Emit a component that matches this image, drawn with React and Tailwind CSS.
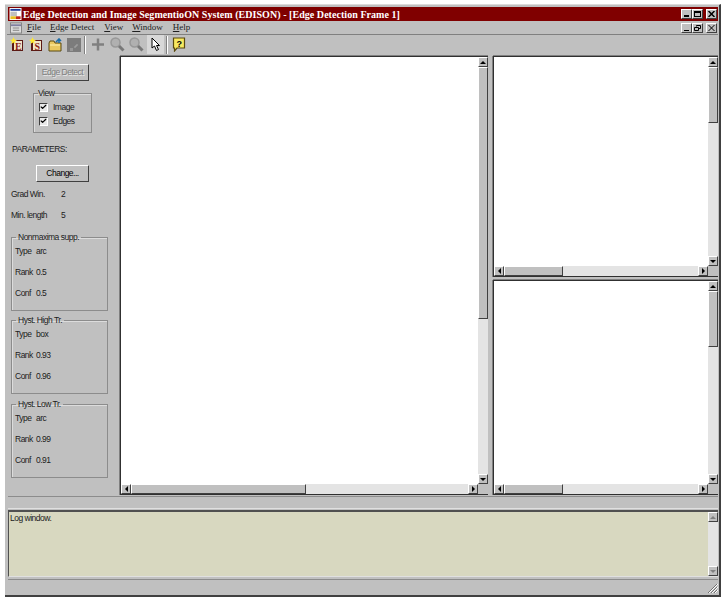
import { Check } from "lucide-react";

const raised = "border border-t-white border-l-white border-r-[#404040] border-b-[#404040]";

const Arrow = ({ dir, disabled }) => {
  const points = {
    up: "0,4 6,4 3,1",
    down: "0,1 6,1 3,4",
    left: "4,0 4,6 1,3",
    right: "1,0 1,6 4,3",
  }[dir];
  const box = dir === "up" || dir === "down" ? "0 0 6 5" : "0 0 5 6";
  const w = dir === "up" || dir === "down" ? 6 : 5;
  const h = dir === "up" || dir === "down" ? 5 : 6;
  return (
    <svg width={w} height={h} viewBox={box}>
      <polygon points={points} fill={disabled ? "#808080" : "#000"} />
    </svg>
  );
};

const ScrollButton = ({ dir, disabled }) => (
  <div className={`w-[10px] h-[10px] shrink-0 bg-[#c0c0c0] flex items-center justify-center ${raised}`}>
    <Arrow dir={dir} disabled={disabled} />
  </div>
);

const VScroll = ({ thumb }) => (
  <div className="w-[10px] shrink-0 flex flex-col bg-[#e4e4e4]">
    <ScrollButton dir="up" />
    <div className={`shrink-0 bg-[#c0c0c0] ${raised}`} style={{ height: thumb }} />
    <div className="flex-1" />
    <ScrollButton dir="down" />
  </div>
);

const HScroll = ({ thumb }) => (
  <div className="h-[10px] shrink-0 flex bg-[#e4e4e4]">
    <ScrollButton dir="left" />
    <div className={`shrink-0 bg-[#c0c0c0] ${raised}`} style={{ width: thumb }} />
    <div className="flex-1" />
    <ScrollButton dir="right" />
    <div className="w-[10px] bg-[#c0c0c0]" />
  </div>
);

const Pane = ({ vThumb, hThumb, className }) => (
  <div className={`flex flex-col border-t border-l border-b border-[#303030] shadow-[0_-1px_0_#808080,-1px_0_0_#808080] ${className}`}>
    <div className="flex flex-1 min-h-0">
      <div className="flex-1 bg-white" />
      <VScroll thumb={vThumb} />
    </div>
    <HScroll thumb={hThumb} />
  </div>
);

const CheckRow = ({ label }) => (
  <div className="flex items-center h-[14px] gap-[5px] pl-[5px]">
    <div className="w-[9px] h-[9px] bg-[#e8e8e8] border border-t-[#404040] border-l-[#404040] border-r-white border-b-white flex items-center justify-center">
      <Check size={8} strokeWidth={4} color="#000" />
    </div>
    <span>{label}</span>
  </div>
);

const Group = ({ title, type, rank, conf }) => (
  <fieldset className="w-[97px] h-[79px] ml-[4px] border border-[#8c8c8c] pl-[3px] shadow-[inset_1px_1px_0_#dcdcdc]">
    <legend className="ml-[1px] px-[2px] leading-[10px] h-[10px]">{title}</legend>
    <div className="grid grid-cols-[21px_1fr] auto-rows-[21px] items-center -mt-[1px]">
      <span>Type</span>
      <span>{type}</span>
      <span>Rank</span>
      <span>{rank}</span>
      <span>Conf</span>
      <span>{conf}</span>
    </div>
  </fieldset>
);

const Star = () => (
  <polygon points="3.5,0 4.5,2.5 7,3 5,4.6 5.6,7 3.5,5.6 1.4,7 2,4.6 0,3 2.5,2.5" fill="#ffe830" />
);

const DocIcon = ({ letter }) => (
  <svg width="14" height="15" viewBox="0 0 14 15">
    <rect x="2" y="3" width="11" height="11" fill="#5c1a14" />
    <rect x="4" y="4" width="8" height="9" fill="#f2e6c8" />
    <text x="8" y="12.5" textAnchor="middle" fontSize="10" fontWeight="700" fontFamily="Liberation Serif" fill="#8c1c14">
      {letter}
    </text>
    <Star />
  </svg>
);

const FolderIcon = () => (
  <svg width="15" height="14" viewBox="0 0 15 14">
    <path d="M1 5 L2 3 L6 3 L7 5 L13 5 L13 13 L1 13 Z" fill="#e8c860" stroke="#5a4a10" />
    <path d="M2 7 H12" stroke="#fff3b0" />
    <path d="M8 4 L11 1 L13 3 M11 1 V5" stroke="#1c6ea8" strokeWidth="1.6" fill="none" />
  </svg>
);

const DiskIcon = () => (
  <svg width="14" height="14" viewBox="0 0 14 14">
    <rect x="0" y="0" width="14" height="14" fill="#7c7c7c" />
    <path d="M7 9 H9 V7 H11" stroke="#a8a8a8" fill="none" />
    <rect x="3" y="10" width="3" height="3" fill="#989898" />
  </svg>
);

const PlusIcon = () => (
  <svg width="15" height="15" viewBox="0 0 15 15">
    <path d="M7 1.500 V13.500 M1 7.500 H13" stroke="#808080" strokeWidth="2.5" />
  </svg>
);

const ZoomIcon = () => (
  <svg width="15" height="15" viewBox="0 0 15 15">
    <circle cx="5.500" cy="5.500" r="4.500" fill="#b0b0b0" stroke="#989898" strokeWidth="1.500" />
    <path d="M9 9 L13.500 13.500" stroke="#787878" strokeWidth="3" />
  </svg>
);

const CursorIcon = () => (
  <svg width="10" height="15" viewBox="0 0 10 15">
    <path d="M1 1 V11 L3.5 9 L5.5 13.5 L7.5 12.5 L5.5 8.5 L8.5 8.5 Z" fill="#fff" stroke="#000" />
  </svg>
);

const HelpIcon = () => (
  <svg width="14" height="15" viewBox="0 0 14 15">
    <path d="M1.5 1 H12.5 V11 H5 L2.5 14 V11 H1.5 Z" fill="#f8e860" stroke="#5a4a10" strokeWidth="1.2" />
    <text x="7" y="9.5" textAnchor="middle" fontSize="9" fontWeight="700" fontFamily="Liberation Sans" fill="#000">
      ?
    </text>
  </svg>
);

const ToolSep = () => <div className="w-[2px] h-[18px] border-l border-l-[#808080] border-r border-r-white" />;

export default function App() {
  return (
    <div className="h-screen bg-white pt-[4px] pl-[5px] overflow-hidden font-['Liberation_Sans',sans-serif] text-[8.5px] tracking-[-0.5px] text-[#202020]">
      <div className="w-[716px] h-[593px] flex flex-col bg-[#c0c0c0] border-t border-t-[#dcdcdc] border-r-2 border-r-[#404040] border-b-2 border-b-[#404040] pl-[2px] pt-[2px]">
        {/* title bar */}
        <div className="h-[14px] shrink-0 ml-[1px] mr-[1px] bg-[#800000] flex items-center pl-[1px] pr-[1px]">
          <svg width="13" height="12" viewBox="0 0 13 13">
            <rect x="0" y="0" width="13" height="13" fill="#fff" />
            <rect x="1" y="1" width="11" height="2" fill="#1c3c9c" />
            <rect x="1" y="4" width="7" height="5" fill="#c0c0c0" />
            <rect x="1" y="9" width="6" height="3" fill="#e8c020" />
            <rect x="7" y="9" width="5" height="3" fill="#c02818" />
          </svg>
          <span className="ml-[1px] font-['Liberation_Serif',serif] font-bold text-[10px] tracking-[0.05px] text-white whitespace-nowrap">
            Edge Detection and Image SegmentioON System (EDISON) - [Edge Detection Frame 1]
          </span>
          <div className="ml-auto flex text-black">
            <div className={`w-[11px] h-[10px] bg-[#c0c0c0] flex items-end justify-center pb-[1px] ${raised}`}>
              <div className="w-[5px] h-[2px] bg-black" />
            </div>
            <div className={`w-[11px] h-[10px] bg-[#c0c0c0] flex items-center justify-center ${raised}`}>
              <div className="w-[7px] h-[6px] border border-black border-t-2" />
            </div>
            <div className={`ml-[3px] w-[11px] h-[10px] bg-[#c0c0c0] flex items-center justify-center ${raised}`}>
              <svg width="7" height="6" viewBox="0 0 7 6">
                <path d="M0.5 0 L6.5 6 M6.5 0 L0.5 6" stroke="#000" strokeWidth="1.5" />
              </svg>
            </div>
          </div>
        </div>

        {/* menu bar */}
        <div className="h-[14px] shrink-0 flex items-center border-b border-b-[#808080] font-['Liberation_Serif',serif] text-[9px] tracking-normal mr-[1px]">
          <svg className="ml-[3px]" width="12" height="12" viewBox="0 0 13 12">
            <rect x="0.5" y="0.5" width="12" height="11" fill="#dcdcdc" stroke="#808080" />
            <path d="M1 3 H12" stroke="#8080a0" strokeWidth="2" />
            <path d="M3 6 H10 M3 8.500 H10" stroke="#808080" />
          </svg>
          <span className="ml-[5px]"><u>F</u>ile</span>
          <span className="ml-[9px]"><u>E</u>dge Detect</span>
          <span className="ml-[10px]"><u>V</u>iew</span>
          <span className="ml-[9px]"><u>W</u>indow</span>
          <span className="ml-[10px]"><u>H</u>elp</span>
          <div className="ml-auto flex mr-[1px]">
            <div className={`w-[11px] h-[10px] bg-[#c0c0c0] flex items-end justify-center pb-[1px] ${raised}`}>
              <div className="w-[5px] h-[1px] bg-black" />
            </div>
            <div className={`w-[11px] h-[10px] bg-[#c0c0c0] flex items-center justify-center ${raised}`}>
              <svg width="7" height="6" viewBox="0 0 7 6">
                <path d="M2.5 1.500 V0.500 H6.500 V3.500 H5 M0.500 2.500 H4.500 V5.500 H0.500 Z" fill="none" stroke="#000" />
              </svg>
            </div>
            <div className={`ml-[3px] w-[11px] h-[10px] bg-[#c0c0c0] flex items-center justify-center ${raised}`}>
              <svg width="7" height="6" viewBox="0 0 7 6">
                <path d="M0.5 0 L6.5 6 M6.5 0 L0.5 6" stroke="#000" />
              </svg>
            </div>
          </div>
        </div>

        {/* toolbar */}
        <div className="h-[21px] shrink-0 flex items-center pl-[3px] pb-[2px]">
          <DocIcon letter="E" />
          <div className="ml-[5px]"><DocIcon letter="S" /></div>
          <div className="ml-[5px]"><FolderIcon /></div>
          <div className="ml-[4px]"><DiskIcon /></div>
          <div className="ml-[3px]"><ToolSep /></div>
          <div className="ml-[5px]"><PlusIcon /></div>
          <div className="ml-[4px]"><ZoomIcon /></div>
          <div className="ml-[4px]"><ZoomIcon /></div>
          <div className="ml-[3px] w-[17px] h-[19px] bg-[#d8d8d8] flex items-center justify-center"><CursorIcon /></div>
          <div className="ml-[2px]"><ToolSep /></div>
          <div className="ml-[4px]"><HelpIcon /></div>
        </div>

        {/* workspace */}
        <div className="flex h-[439px] shrink-0">
          <div className="w-[113px] shrink-0 flex flex-col">
            <div className={`mt-[8px] ml-[29px] w-[53px] h-[17px] flex items-center justify-center text-[#808080] [text-shadow:1px_1px_0_#e8e8e8] ${raised}`}>
              Edge Detect
            </div>
            <fieldset className="mt-[7px] ml-[26px] w-[59px] h-[45px] border border-[#8c8c8c] shadow-[inset_1px_1px_0_#dcdcdc]">
              <legend className="ml-[4px] leading-[10px] h-[10px]">View</legend>
              <div className="mt-[2px]">
                <CheckRow label="Image" />
                <CheckRow label="Edges" />
              </div>
            </fieldset>
            <div className="mt-[11px] ml-[5px] h-[10px] leading-[10px]">PARAMETERS:</div>
            <div className={`mt-[11px] ml-[29px] w-[53px] h-[17px] flex items-center justify-center text-[#000] ${raised}`}>
              Change...
            </div>
            <div className="ml-[4px] mt-[7px] h-[10px] leading-[10px] grid grid-cols-[50px_1fr]">
              <span>Grad Win.</span>
              <span>2</span>
            </div>
            <div className="ml-[4px] mt-[11px] h-[10px] leading-[10px] grid grid-cols-[50px_1fr]">
              <span>Min. length</span>
              <span>5</span>
            </div>
            <div className="mt-[12px]">
              <Group title="Nonmaxima supp." type="arc" rank="0.5" conf="0.5" />
            </div>
            <div className="mt-[4px]">
              <Group title="Hyst. High Tr." type="box" rank="0.93" conf="0.96" />
            </div>
            <div className="mt-[5px]">
              <Group title="Hyst. Low Tr." type="arc" rank="0.99" conf="0.91" />
            </div>
          </div>

          <Pane vThumb={252} hThumb={175} className="w-[368px] shrink-0" />

          <div className="ml-[5px] mr-[1px] flex-1 flex flex-col">
            <Pane vThumb={56} hThumb={59} className="h-[221px] shrink-0" />
            <div className="h-[3px] shrink-0" />
            <Pane vThumb={56} hThumb={59} className="flex-1 min-h-0" />
          </div>
        </div>

        {/* status strip */}
        <div className="h-[13px] shrink-0 mt-[1px] ml-[1px] mr-[1px] border-t border-t-[#8c8c8c] border-b border-b-[#e0e0e0]" />

        {/* log window */}
        <div className="h-[67px] shrink-0 mt-[1px] ml-[1px] mr-[1px] flex bg-[#d8d8c0] border-t-2 border-t-[#505050] border-l border-l-[#505050] border-b border-b-[#e0e0e0]">
          <div className="flex-1 pl-[1px] leading-[12px] text-[#202020]">Log window.</div>
          <div className="w-[10px] shrink-0 flex flex-col justify-between bg-[#e4e4e4]">
            <ScrollButton dir="up" disabled />
            <ScrollButton dir="down" disabled />
          </div>
        </div>

        {/* bottom status */}
        <div className="flex-1 mt-[2px] ml-[1px] mr-[1px] mb-[1px] border-t border-t-[#8c8c8c] flex justify-end items-end">
          <svg width="12" height="12" viewBox="0 0 12 12">
            <path d="M11 2 L2 11 M11 5 L5 11 M11 8 L8 11" stroke="#707070" />
            <path d="M12 2 L3 11 M12 5 L6 11 M12 8 L9 11" stroke="#fff" />
          </svg>
        </div>
      </div>
    </div>
  );
}
